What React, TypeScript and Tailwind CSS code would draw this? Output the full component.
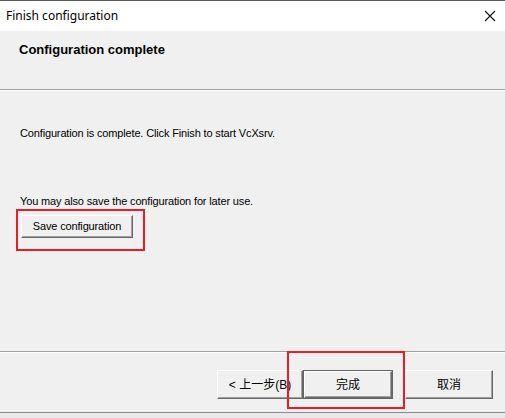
const font = { fontFamily: '"Liberation Sans", "Noto Sans CJK SC", sans-serif' };

const bevel =
  'bg-[#f0f0f0] border-t border-l border-white border-r border-b border-r-[#696969] border-b-[#696969] shadow-[inset_-1px_-1px_0_#a0a0a0]';

function ClassicButton({
  label,
  width,
  isDefault,
}: {
  label: string;
  width: string;
  isDefault?: boolean;
}) {
  if (isDefault) {
    return (
      <div className={`${width} h-[29px] border border-[#646464]`}>
        <div className={`h-full w-full flex items-center justify-center ${bevel} text-[12px] text-black`}>
          {label}
        </div>
      </div>
    );
  }
  return (
    <div className={`${width} h-[29px] flex items-center justify-center ${bevel} text-[12px] text-black`}>
      {label}
    </div>
  );
}

export default function App() {
  return (
    <div
      className="relative w-[505px] h-[418px] bg-[#f0f0f0] flex flex-col border-t border-[#5a5a5a] overflow-hidden"
      style={font}
    >
      {/* title bar */}
      <div className="h-[30px] bg-white flex items-center justify-between pl-[6px] pr-[9px] shrink-0">
        <span
          className="text-[12px] text-black"
          style={{ fontFamily: '"Noto Sans", "Noto Sans CJK SC", sans-serif' }}
        >
          Finish configuration
        </span>
        <svg width="12" height="12" viewBox="0 0 12 12">
          <path d="M1 1 L11 11 M11 1 L1 11" stroke="#111" strokeWidth="1.1" />
        </svg>
      </div>

      {/* header */}
      <div className="h-[58px] shrink-0 pl-[19px] pt-[11px]">
        <div className="text-[13px] leading-[16px] font-bold text-black">Configuration complete</div>
      </div>
      <div className="h-px bg-[#a0a0a0] shrink-0" />
      <div className="h-px bg-white shrink-0" />

      {/* body */}
      <div className="h-[260px] shrink-0 flex flex-col pl-[20px] text-[11px] tracking-[-0.15px] text-black">
        <div className="mt-[35px] leading-[14px]">
          Configuration is complete. Click Finish to start VcXsrv.
        </div>
        <div className="mt-[54px] leading-[14px]">
          You may also save the configuration for later use.
        </div>
        <div className={`mt-[7px] ml-[1px] w-[112px] h-[23px] flex items-center justify-center ${bevel}`}>
          Save configuration
        </div>
      </div>

      <div className="h-px bg-[#a0a0a0] shrink-0" />
      <div className="h-px bg-white shrink-0" />

      {/* footer */}
      <div className="h-[59px] shrink-0 flex items-start justify-end pt-[17px] pr-[12px]">
        <ClassicButton label="< 上一步(B)" width="w-[86px]" />
        <ClassicButton label="完成" width="w-[90px]" isDefault />
        <div className="w-[12px]" />
        <ClassicButton label="取消" width="w-[88px]" />
      </div>
      <div className="h-px bg-[#8a8a8a] shrink-0" />
      <div className="flex-1 bg-[#e9e9e9]" />

      {/* annotation boxes */}
      <div className="absolute left-[16px] top-[208px] w-[129px] h-[42px] border-2 border-[#ec1c24]" />
      <div className="absolute left-[287px] top-[350px] w-[118px] h-[58px] border-2 border-[#ec1c24]" />
    </div>
  );
}
